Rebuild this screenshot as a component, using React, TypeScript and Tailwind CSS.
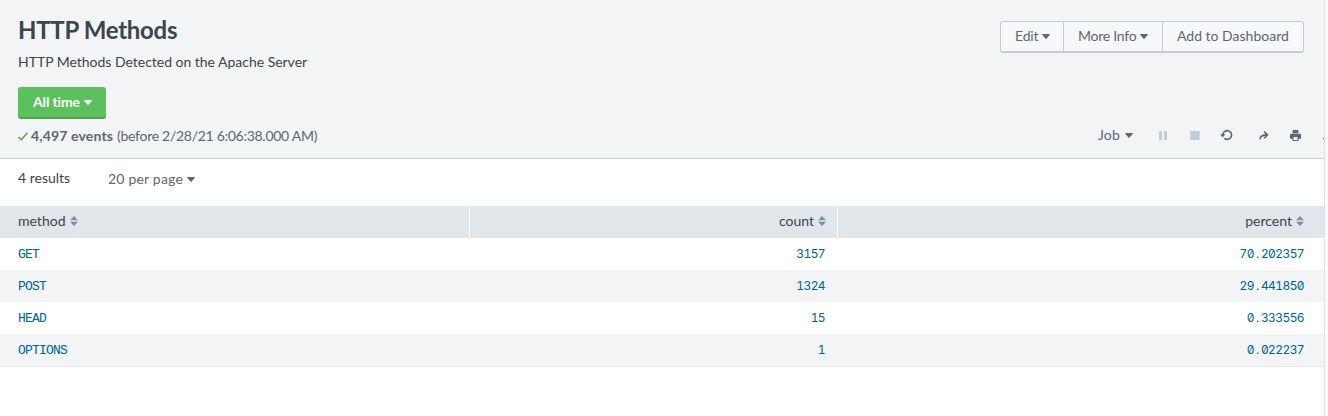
import React from "react";

function Caret({ className = "" }: { className?: string }) {
  return (
    <svg className={`h-[5px] w-[8px] shrink-0 ${className}`} viewBox="0 0 8 5">
      <path d="M0.7 0H7.3Q8.2 0 7.6 0.9L4.6 4.6Q4 5.2 3.4 4.6L0.4 0.9Q-0.2 0 0.7 0Z" fill="currentColor" />
    </svg>
  );
}

function SortIcon() {
  return (
    <svg className="h-[10px] w-[8px] shrink-0 text-[#818d99]" viewBox="0 0 8 10">
      <path d="M4 0L8 4.2H0ZM0 5.8H8L4 10Z" fill="currentColor" />
    </svg>
  );
}

const rows = [
  { method: "GET", count: "3157", percent: "70.202357" },
  { method: "POST", count: "1324", percent: "29.441850" },
  { method: "HEAD", count: "15", percent: "0.333556" },
  { method: "OPTIONS", count: "1", percent: "0.022237" },
];

const columns = "grid grid-cols-[470px_368px_486px]";
const numeric =
  "text-right font-[Inter,sans-serif] text-[12px] tracking-[-0.6px] [font-feature-settings:'tnum','zero']";

function Percent({ value }: { value: string }) {
  const [whole, fraction] = value.split(".");
  return (
    <span className={`${numeric} pr-[20px]`}>
      {whole}
      <span className="inline-block w-[7px] text-center">.</span>
      {fraction}
    </span>
  );
}

export default function App() {
  return (
    <div className="flex h-[416px] w-[1328px] overflow-hidden bg-[#fafafa] font-[Lato,sans-serif] text-[14px] leading-[20px] text-[#3c444d] [font-variant-ligatures:none]">
      <main className="w-[1325px] shrink-0 border-r border-[#e1e3e6] bg-white">
        <header className="flex h-[159px] justify-between border-b border-[#c3cbd4] bg-[#f2f4f5] pl-[18px]">
          <div className="flex flex-col items-start">
            <h1 className="mt-[15px] h-[30px] text-[24px] leading-[30px] font-bold tracking-[-0.3px] whitespace-nowrap">HTTP Methods</h1>
            <p className="mt-[7px] whitespace-nowrap tracking-[-0.02px]">HTTP Methods Detected on the Apache Server</p>
            <button className="mt-[15px] flex h-[32px] w-[88px] items-center gap-[4px] rounded-[3px] border-b-2 border-[#53a051] bg-[#5cc05c] pl-[15px] font-bold tracking-[-0.15px] whitespace-nowrap text-white">
              All time
              <Caret />
            </button>
            <div className="mt-[7px] flex items-center whitespace-nowrap text-[#5c6773]">
              <svg className="mr-[3px] h-[9px] w-[10px]" viewBox="0 0 10 9">
                <path d="M0.5 5L3.4 7.8L9.4 0.8" fill="none" stroke="#53a051" strokeWidth="1.4" />
              </svg>
              <b className="tracking-[0.15px]">4,497 events</b>
              <span className="ml-[4px] tracking-[-0.28px]">(before 2/28/21 6:06:38.000 AM)</span>
            </div>
          </div>
          <div className="flex flex-col items-end">
            <div className="mt-[21px] mr-[20px] flex h-[32px] w-[304px] rounded-[3px] border border-b-2 border-[#c3cbd4] bg-[#f7f8fa] text-[#5c6773]">
              <button className="flex w-[63px] items-center gap-[4px] border-r border-[#c3cbd4] pb-px pl-[14px] tracking-[-0.15px] whitespace-nowrap">Edit<Caret /></button>
              <button className="flex w-[99px] items-center gap-[4px] border-r border-[#c3cbd4] pb-px pl-[14px] tracking-[-0.25px] whitespace-nowrap">More Info<Caret /></button>
              <button className="flex items-center pb-px pl-[14px] whitespace-nowrap">Add to Dashboard</button>
            </div>
            <div className="mt-[72px] flex h-[20px] w-[226px] items-center overflow-hidden text-[#5c6773]">
              <span className="w-[27px] shrink-0 tracking-[0.2px] whitespace-nowrap">Job</span>
              <Caret />
              <svg className="ml-[26px] h-[9px] w-[8px] shrink-0" viewBox="0 0 8 9">
                <path d="M0 0H3V9H0ZM5 0H8V9H5Z" fill="#c3cbd4" />
              </svg>
              <svg className="ml-[23px] h-[9px] w-[10px] shrink-0" viewBox="0 0 10 9">
                <path d="M0.3 0H9.7V9H0.3Z" fill="#c3cbd4" />
              </svg>
              <svg className="ml-[20px] h-[12px] w-[13px] shrink-0" viewBox="0 0 13 12">
                <path d="M2.8 6A4.4 4.4 0 1 1 4.4 9.4" fill="none" stroke="currentColor" strokeWidth="1.6" />
                <path d="M0 5.2H5.4L2.7 8.6Z" fill="currentColor" />
              </svg>
              <svg className="ml-[26px] h-[10px] w-[10px] shrink-0" viewBox="0 0 10 10">
                <path d="M1 9.3Q1.2 4.9 8 4.9M5.2 1.6L8.5 4.9L5.2 8.2" fill="none" stroke="currentColor" strokeWidth="1.6" />
              </svg>
              <svg className="ml-[21px] h-[11px] w-[11px] shrink-0" viewBox="0 0 11 10" preserveAspectRatio="none">
                <path d="M2.6 0H8.4V3H2.6ZM1 3.5H10Q11 3.5 11 4.5V8H8.5V10H2.5V8H0V4.5Q0 3.5 1 3.5ZM3.5 6.3V9H7.5V6.3Z" fill="currentColor" fillRule="evenodd" />
              </svg>
              <svg className="ml-[21px] h-[12px] w-[4px] shrink-0" viewBox="0 0 4 12">
                <path d="M1 9H3V10.2H1Z" fill="currentColor" />
              </svg>
            </div>
          </div>
        </header>
        <div className="flex h-[47px] pt-[9px] pl-[18px]">
          <span className="w-[90px] whitespace-nowrap">4 results</span>
          <button className="mt-px flex h-[20px] items-center gap-[4px] tracking-[0.2px] whitespace-nowrap text-[#5c6773]">20 per page<Caret /></button>
        </div>
        <section className="border-b border-[#e1e6eb]">
          <div className={`${columns} h-[32px] bg-[#e1e6eb]`}>
            <div className="flex items-center gap-[5px] border-r border-white pb-[2px] pl-[18px]">method<SortIcon /></div>
            <div className="flex items-center justify-end gap-[4px] border-r border-white pr-[11px] pb-[2px]">count<SortIcon /></div>
            <div className="flex items-center justify-end gap-[4px] pr-[20px] pb-[2px]">percent<SortIcon /></div>
          </div>
          {rows.map((row) => (
            <div key={row.method} className={`${columns} h-[32px] items-center text-[#006297] even:bg-white odd:bg-[#f2f4f5]`}>
              <span className="pt-[2px] pl-[18px] font-[Liberation_Mono,monospace] text-[13px] tracking-[-0.8px]">{row.method}</span>
              <span className={`${numeric} pr-[13px]`}>{row.count}</span>
              <Percent value={row.percent} />
            </div>
          ))}
        </section>
      </main>
    </div>
  );
}
